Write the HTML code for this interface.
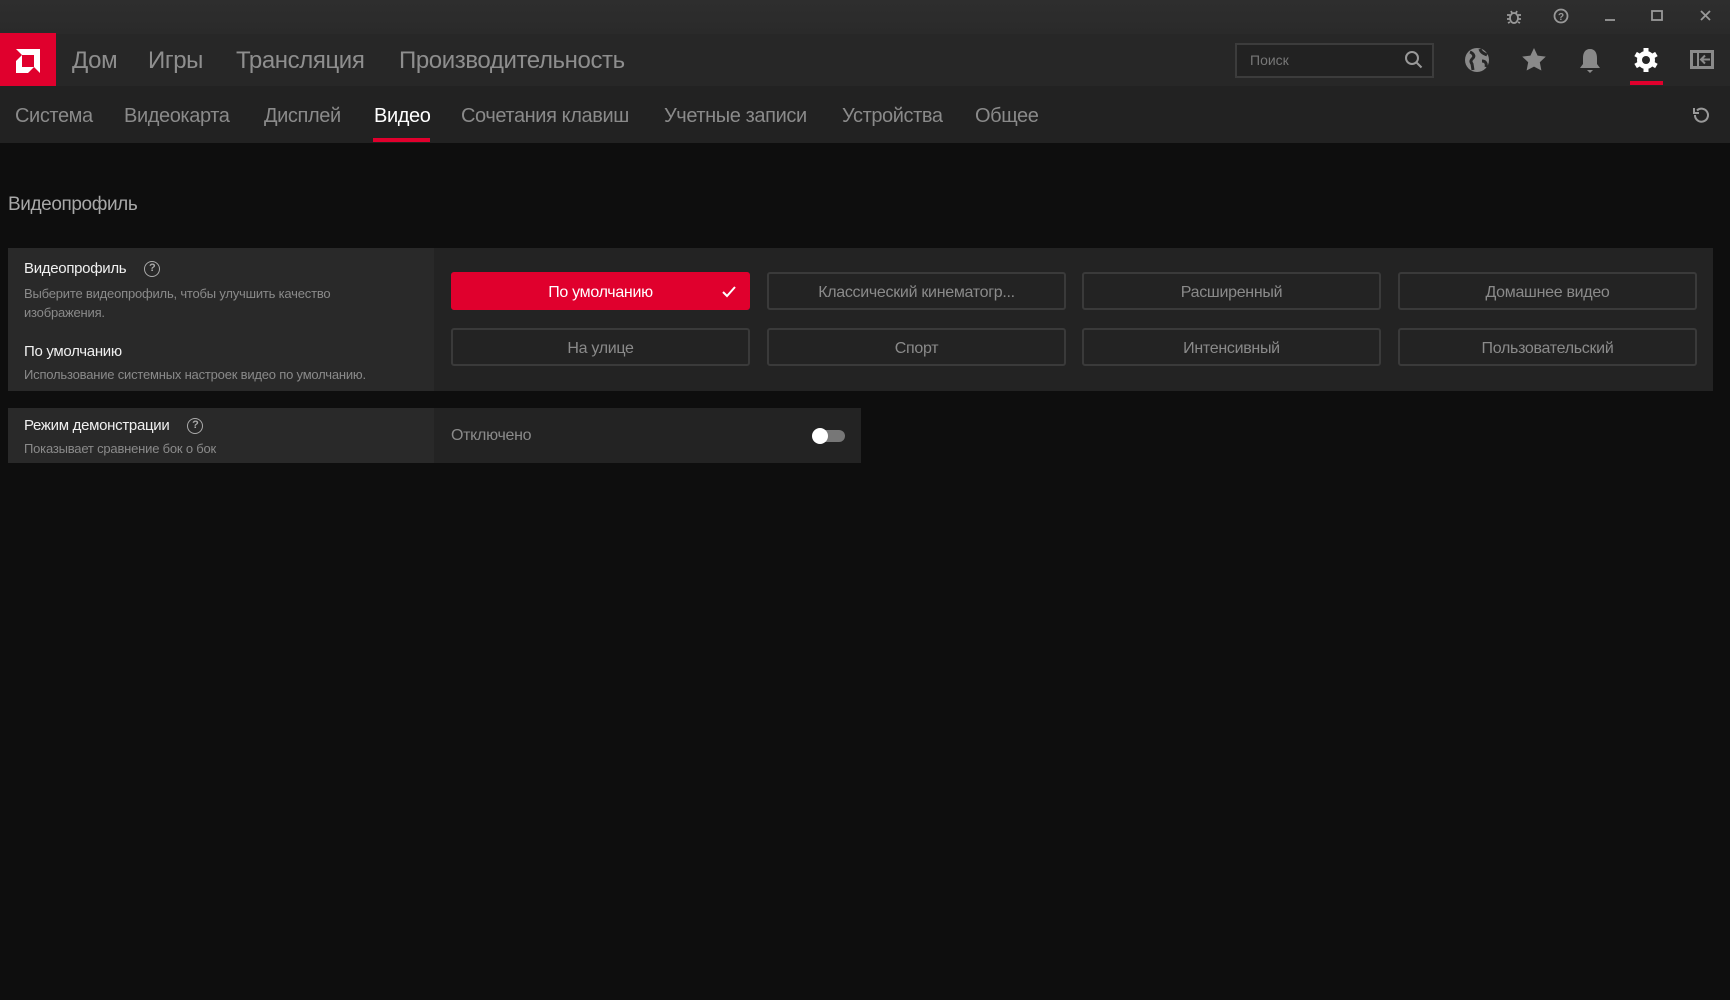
<!DOCTYPE html>
<html><head><meta charset="utf-8"><style>
*{margin:0;padding:0;box-sizing:border-box}
body{width:1730px;height:1000px;background:#0e0e0e;font-family:"Liberation Sans",sans-serif;position:relative;overflow:hidden;color:#8c8c8c}
.abs{position:absolute}
#title{left:0;top:0;width:1730px;height:34px;background:linear-gradient(#2e2e2e,#2a2a2a)}
#nav{left:0;top:34px;width:1730px;height:52px;background:#272727}
#logo{left:0;top:33px;width:56px;height:53px;background:#e0002d}
.nt{top:35px;height:52px;line-height:52px;font-size:24px;color:#8e8e8e;letter-spacing:-0.4px}
#sub{left:0;top:86px;width:1730px;height:57px;background:#222}
.st{top:87px;height:57px;line-height:58px;font-size:20px;color:#8a8a8a;letter-spacing:-0.4px}
.card{background:#232323}
.lp{background:#292929}
.btn{position:absolute;width:299px;height:38px;border:2px solid #3a3a3a;border-radius:3px;color:#8a8a8a;font-size:16px;text-align:center;line-height:37px;letter-spacing:-0.3px}
.h{color:#f0f0f0;font-size:15px;letter-spacing:-0.3px}
.d{color:#8a8a8a;font-size:13px;letter-spacing:-0.2px}
.q{display:inline-block;width:16px;height:16px;border:1.5px solid #aaa;border-radius:50%;font-size:11px;line-height:13px;text-align:center;color:#aaa;font-weight:bold;vertical-align:middle}
</style></head><body>
<div id="title" class="abs"></div>
<div id="nav" class="abs"></div>
<div id="logo" class="abs"><svg width="56" height="53"><path d="M16 16h24v24l-6-6V22H22zM16 28l6-6v12h12l-6 6H16z" fill="#fff"/></svg></div>
<div class="abs nt" style="left:72px">Дом</div>
<div class="abs nt" style="left:148px">Игры</div>
<div class="abs nt" style="left:236px">Трансляция</div>
<div class="abs nt" style="left:399px">Производительность</div>

<svg class="abs" style="left:1500px;top:4px" width="230" height="26" fill="none" stroke="#999" stroke-width="1.8">
<g transform="translate(14,13)"><ellipse cx="0" cy="1" rx="4" ry="5"/><path d="M-7 -2h3M4 -2h3M-7 2h3M4 2h3M-6 6l2-1M6 6l-2-1M-3-6l1 2M3-6l-1 2"/></g>
<circle cx="61" cy="12" r="6.5"/><text x="58" y="16" font-size="10" fill="#999" stroke="none" font-family="Liberation Sans" font-weight="bold">?</text>
<path d="M105 16h10"/>
<rect x="152" y="7" width="10" height="9"/>
<path d="M201 7l9 9M210 7l-9 9"/>
</svg>

<div class="abs" style="left:1235px;top:43px;width:199px;height:35px;border:2px solid #3c3c3c;background:#222"></div>
<div class="abs" style="left:1250px;top:43px;line-height:35px;font-size:14px;color:#777">Поиск</div>
<svg class="abs" style="left:1403px;top:49px" width="22" height="22" fill="none" stroke="#999" stroke-width="2"><circle cx="9" cy="9" r="6"/><path d="M13.5 13.5l5 5"/></svg>

<svg class="abs" style="left:1462px;top:45px" width="260" height="40">
<circle cx="15" cy="15" r="12" fill="#8a8a8a"/>
<path d="M8 7c3 1 5 4 3 6s-3 3-1 6l1 6M18 4c1 4 5 5 7 6M20 16c3 0 5 2 4 6" stroke="#272727" stroke-width="3" fill="none"/>
<path d="M72 3l3.6 7.6 8.2 1-6 5.7 1.6 8.2L72 21.6l-7.4 3.9 1.6-8.2-6-5.7 8.2-1z" fill="#8a8a8a"/>
<path d="M128 4c-5 0-7 4-7 9v6l-3 4h20l-3-4v-6c0-5-2-9-7-9zM125 25h6l-3 3z" fill="#8a8a8a"/>
<g transform="translate(184,15)" fill="#fff"><circle r="9"/><rect x="-2.5" y="-12" width="5" height="24"/><rect x="-2.5" y="-12" width="5" height="24" transform="rotate(60)"/><rect x="-2.5" y="-12" width="5" height="24" transform="rotate(120)"/><circle r="4" fill="#272727"/></g>
<rect x="228" y="5" width="24" height="19" fill="#8a8a8a"/><rect x="231" y="8" width="4" height="13" fill="#272727"/><rect x="237" y="8" width="12" height="13" fill="#272727"/><path d="M248 14.5h-9M243 10.5l-4 4 4 4" stroke="#8a8a8a" stroke-width="2" fill="none"/>
</svg>
<div class="abs" style="left:1630px;top:81px;width:33px;height:4px;background:#e0002d"></div>

<div id="sub" class="abs"></div>
<div class="abs st" style="left:15px">Система</div>
<div class="abs st" style="left:124px">Видеокарта</div>
<div class="abs st" style="left:264px">Дисплей</div>
<div class="abs st" style="left:374px;color:#fff">Видео</div>
<div class="abs" style="left:373px;top:138px;width:57px;height:4px;background:#e0002d"></div>
<div class="abs st" style="left:461px">Сочетания клавиш</div>
<div class="abs st" style="left:664px">Учетные записи</div>
<div class="abs st" style="left:842px">Устройства</div>
<div class="abs st" style="left:975px">Общее</div>
<svg class="abs" style="left:1690px;top:105px" width="22" height="22" fill="none" stroke="#999" stroke-width="2"><path d="M5 10a6.5 6.5 0 1 0 2-4.5"/><path d="M4 3v5h5"/></svg>

<div class="abs" style="left:8px;top:194px;font-size:19px;color:#a8a8a8;letter-spacing:-0.4px">Видеопрофиль</div>

<div class="abs card" style="left:8px;top:248px;width:1705px;height:143px"></div>
<div class="abs lp" style="left:8px;top:248px;width:426px;height:143px"></div>
<div class="abs h" style="left:24px;top:260px">Видеопрофиль <span class="q" style="margin-left:14px">?</span></div>
<div class="abs d" style="left:24px;top:284px;line-height:19px">Выберите видеопрофиль, чтобы улучшить качество<br>изображения.</div>
<div class="abs h" style="left:24px;top:343px">По умолчанию</div>
<div class="abs d" style="left:24px;top:367px">Использование системных настроек видео по умолчанию.</div>

<div class="btn" style="left:451px;top:272px;background:#e0002d;border-color:#e0002d;color:#fff">По умолчанию<svg style="position:absolute;right:12px;top:12px" width="14" height="12" fill="none" stroke="#fff" stroke-width="2"><path d="M1 6l4 4 8-9"/></svg></div>
<div class="btn" style="left:767px;top:272px">Классический кинематогр...</div>
<div class="btn" style="left:1082px;top:272px">Расширенный</div>
<div class="btn" style="left:1398px;top:272px">Домашнее видео</div>
<div class="btn" style="left:451px;top:328px">На улице</div>
<div class="btn" style="left:767px;top:328px">Спорт</div>
<div class="btn" style="left:1082px;top:328px">Интенсивный</div>
<div class="btn" style="left:1398px;top:328px">Пользовательский</div>

<div class="abs card" style="left:8px;top:408px;width:853px;height:55px"></div>
<div class="abs lp" style="left:8px;top:408px;width:426px;height:55px"></div>
<div class="abs h" style="left:24px;top:417px">Режим демонстрации <span class="q" style="margin-left:14px">?</span></div>
<div class="abs d" style="left:24px;top:441px">Показывает сравнение бок о бок</div>
<div class="abs" style="left:451px;top:427px;font-size:16px;color:#8a8a8a;letter-spacing:-0.3px">Отключено</div>
<div class="abs" style="left:814px;top:430px;width:31px;height:12px;border-radius:6px;background:#777"></div>
<div class="abs" style="left:812px;top:428px;width:16px;height:16px;border-radius:50%;background:#fff"></div>
</body></html>
